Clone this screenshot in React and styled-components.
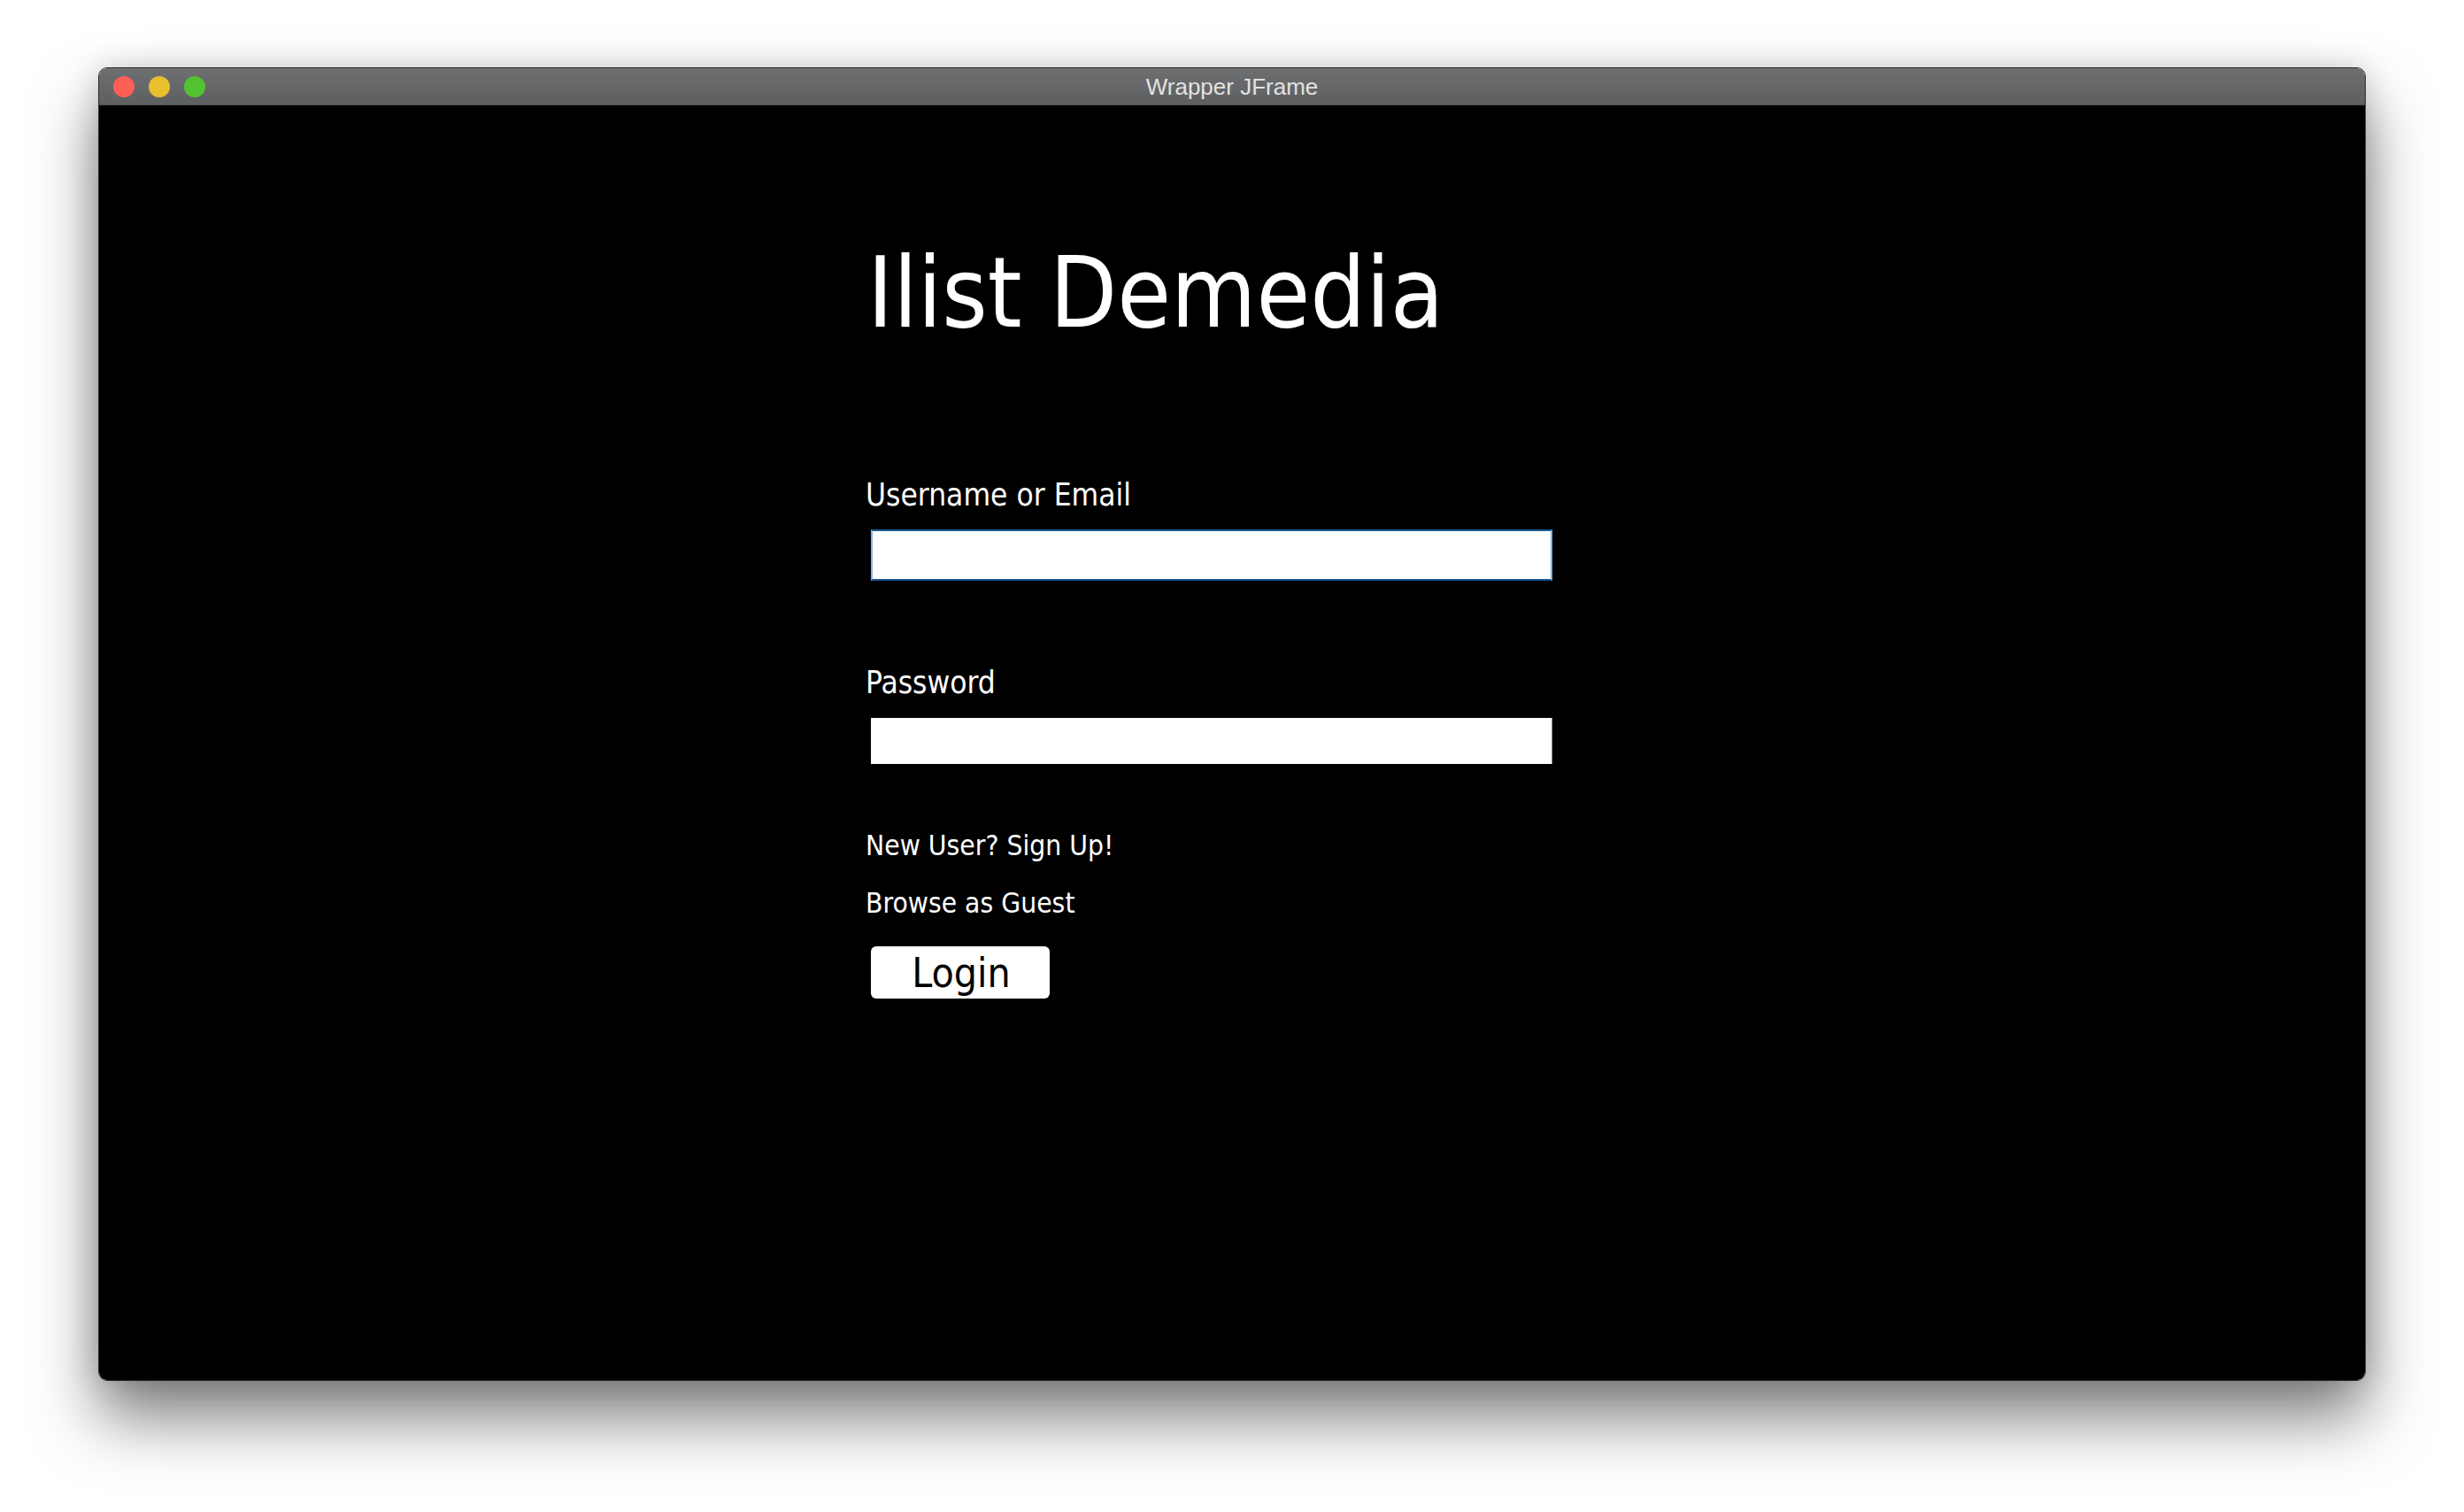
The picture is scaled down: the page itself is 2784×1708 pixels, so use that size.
import React from "react";
import styled, { createGlobalStyle } from "styled-components";

const GlobalStyle = createGlobalStyle`
  html, body {
    margin: 0;
    padding: 0;
    background: #ffffff;
  }
  body {
    font-family: "DejaVu Sans Condensed", "DejaVu Sans", sans-serif;
  }
`;

const Page = styled.div`
  width: 2784px;
  height: 1708px;
  padding: 76px 0 0 111px;
  box-sizing: border-box;
  background: #ffffff;
  overflow: hidden;
`;

const Window = styled.div`
  width: 2562px;
  height: 1484px;
  display: flex;
  flex-direction: column;
  border-radius: 10px;
  overflow: hidden;
  border: 1px solid #2b2b2b;
  box-sizing: border-box;
  box-shadow: 0 42px 72px rgba(0, 0, 0, 0.5), 0 0 34px rgba(0, 0, 0, 0.16);
`;

const TitleBar = styled.div`
  position: relative;
  height: 42px;
  flex-shrink: 0;
  display: flex;
  align-items: center;
  justify-content: center;
  background: linear-gradient(#6e6f71, #5e5f61);
  border-bottom: 1px solid #4f5052;
  box-sizing: border-box;
`;

const Lights = styled.div`
  position: absolute;
  left: 16px;
  top: 9px;
  display: flex;
  gap: 16px;
`;

const Light = styled.span`
  width: 24px;
  height: 24px;
  border-radius: 50%;
  background: ${(p) => p.color};
`;

const Title = styled.span`
  font-family: "Liberation Sans", Arial, sans-serif;
  font-size: 26px;
  color: #e2e2e2;
  line-height: 1;
`;

const Content = styled.div`
  flex: 1;
  background: #000000;
  padding: 157px 0 0 866px;
  display: flex;
  flex-direction: column;
  align-items: flex-start;
`;

const Heading = styled.h1`
  margin: 0 0 156px 2px;
  font-family: "DejaVu Sans Condensed", "DejaVu Sans", sans-serif;
  font-weight: normal;
  font-size: 110px;
  line-height: 1;
  color: #ffffff;
`;

const Label = styled.label`
  font-size: 35px;
  line-height: 1;
  color: #ffffff;
`;

const Field = styled.div`
  width: 770px;
  height: ${(p) => (p.focused ? "58px" : "52px")};
  margin: ${(p) => (p.focused ? "21px 0 98px 6px" : "22px 0 77px 6px")};
  background: #ffffff;
  box-sizing: border-box;
  border-style: solid;
  border-width: ${(p) => (p.focused ? "2px" : "0 1px 0 0")};
  border-color: ${(p) =>
    p.focused ? "#1c5790 #7db4e8 #1c5790 #7db4e8" : "#9a9a9a"};
`;

const Link = styled.span`
  font-size: 31.5px;
  line-height: 1;
  color: #ffffff;
  margin-bottom: ${(p) => p.gap}px;
`;

const LoginButton = styled.button`
  margin-left: 6px;
  width: 202px;
  height: 59px;
  border: none;
  border-radius: 6px;
  background: #ffffff;
  color: #000000;
  font-family: "DejaVu Sans Condensed", "DejaVu Sans", sans-serif;
  font-size: 46px;
  line-height: 1;
  padding: 0 0 0 2px;
  display: flex;
  align-items: center;
  justify-content: center;
`;

const App = () => {
  return (
    <Page>
      <GlobalStyle />
      <Window>
        <TitleBar>
          <Lights>
            <Light color="#fd5f57" />
            <Light color="#e8bf2c" />
            <Light color="#53c22f" />
          </Lights>
          <Title>Wrapper JFrame</Title>
        </TitleBar>
        <Content>
          <Heading>Ilist Demedia</Heading>
          <Label>Username or Email</Label>
          <Field focused />
          <Label>Password</Label>
          <Field />
          <Link gap={33}>New User? Sign Up!</Link>
          <Link gap={33}>Browse as Guest</Link>
          <LoginButton>Login</LoginButton>
        </Content>
      </Window>
    </Page>
  );
};

export default App;
